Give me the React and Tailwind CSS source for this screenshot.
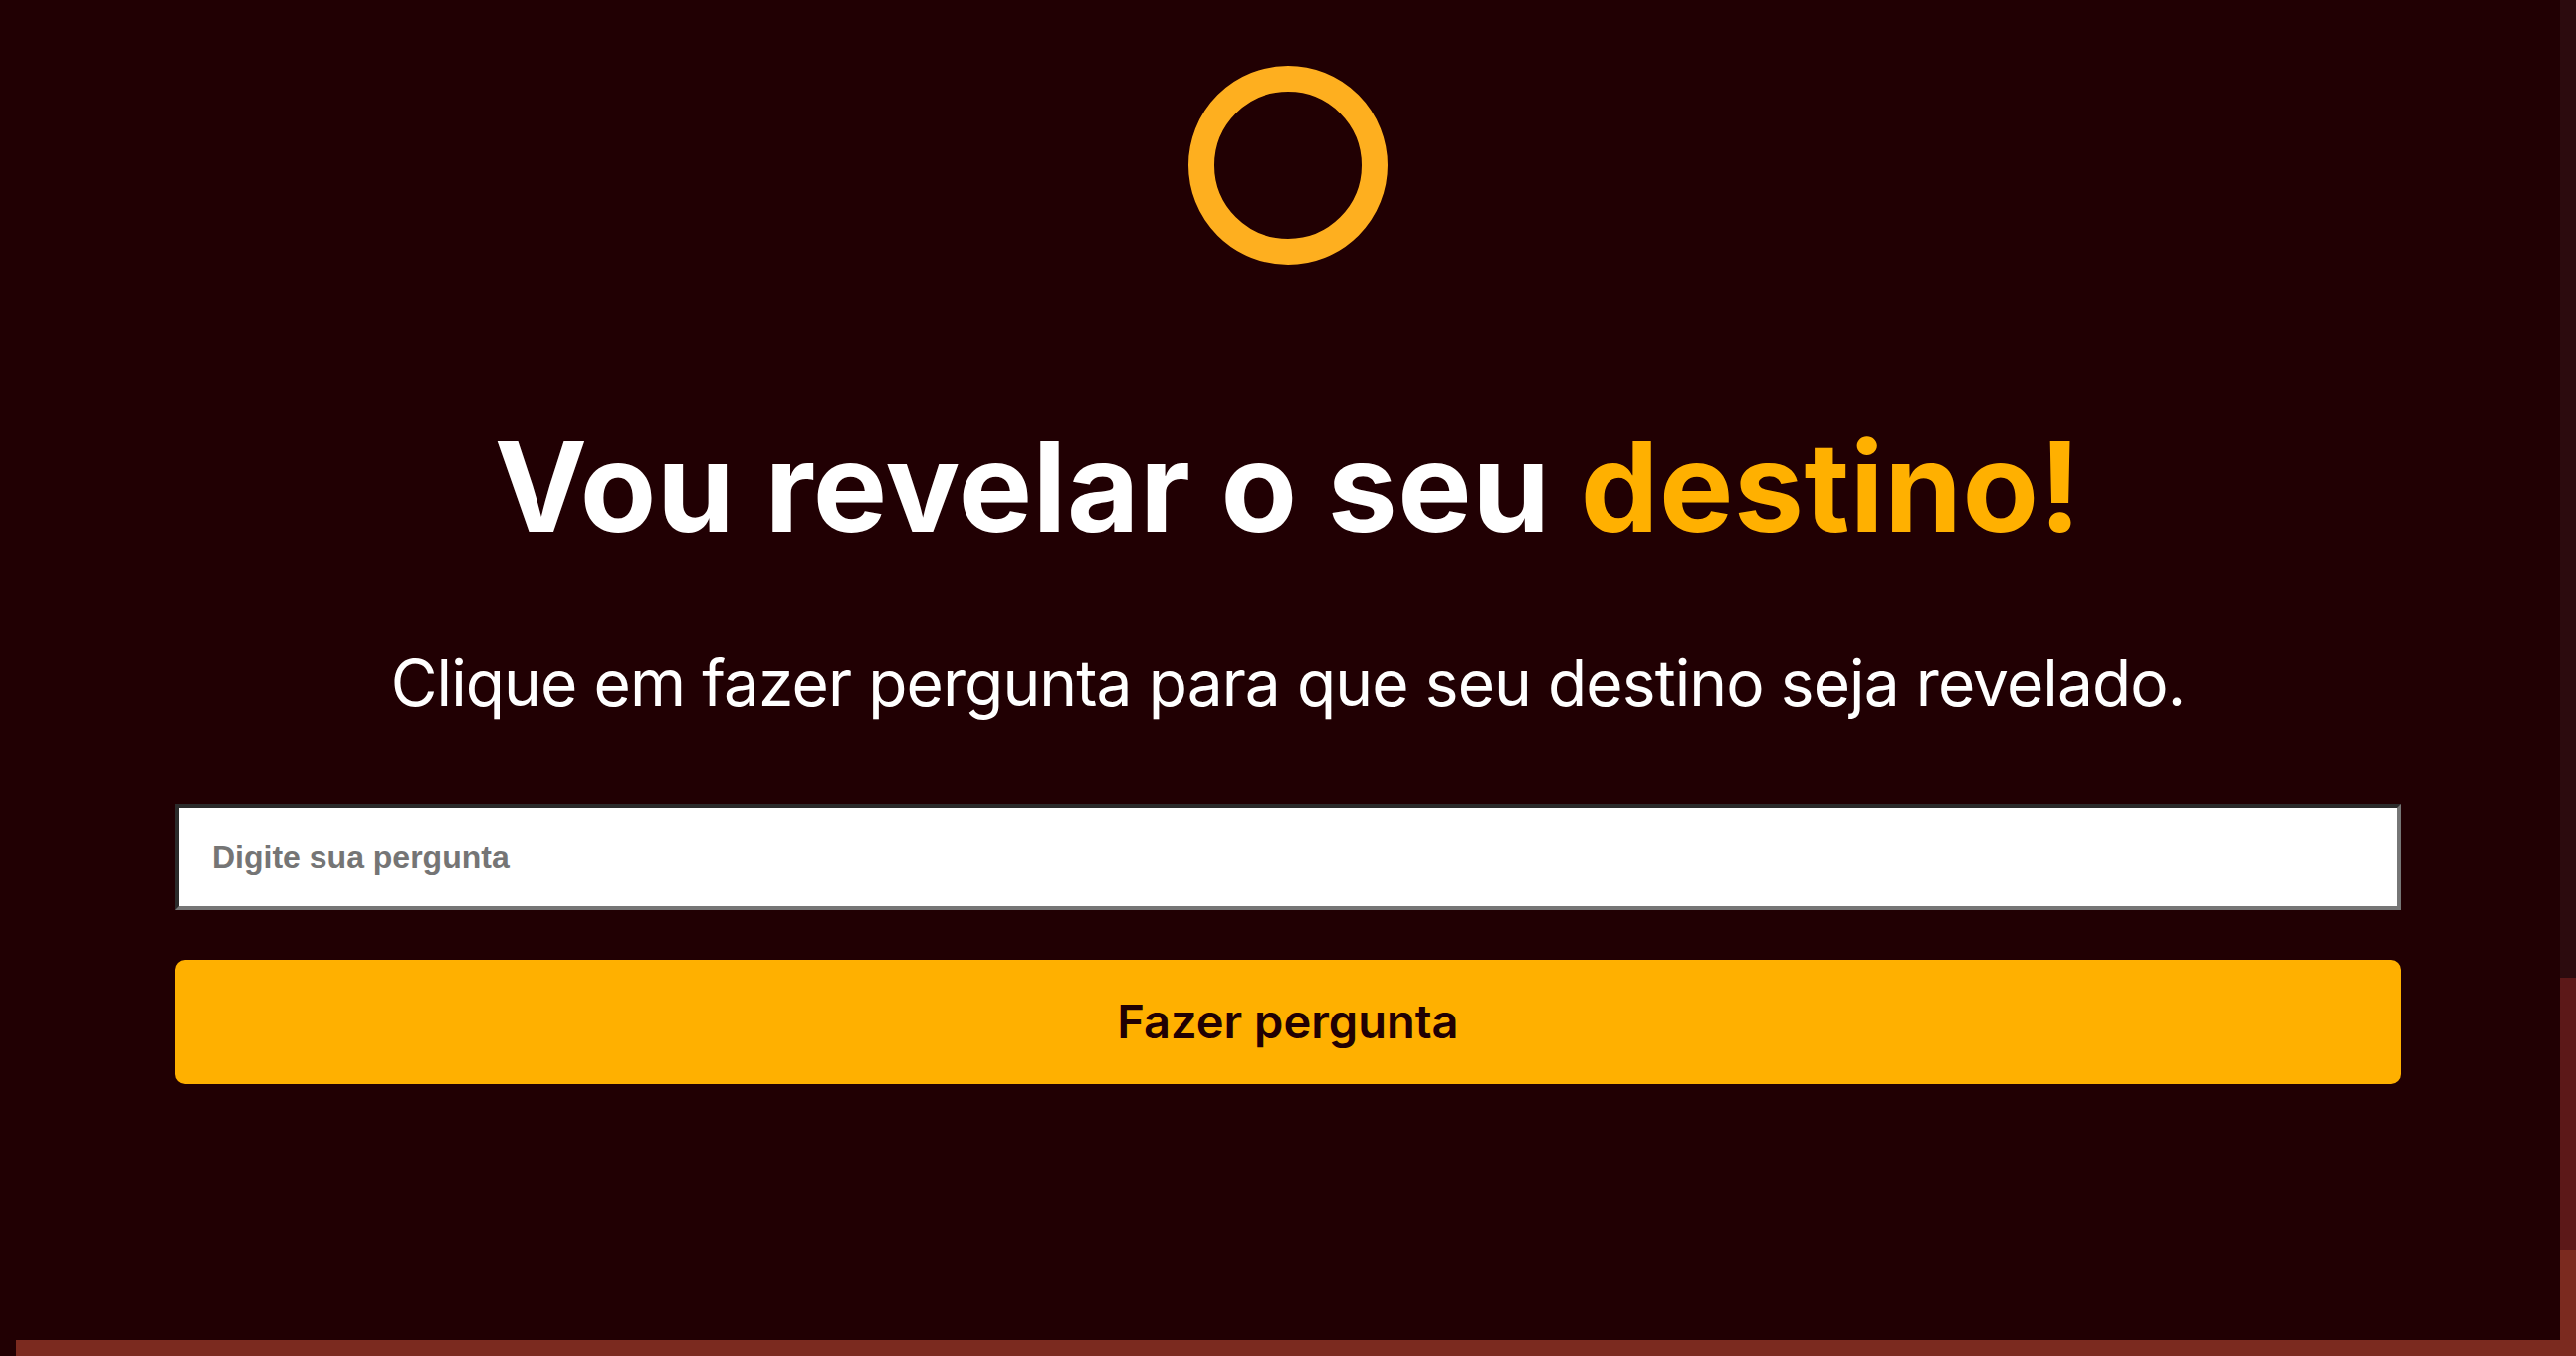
import { useState } from "react";

export default function App() {
  const [pergunta, setPergunta] = useState("");

  return (
    <div className="flex flex-col h-[1362px] w-full bg-[#7b2a1f] overflow-hidden">
      {/* área principal + faixa lateral */}
      <div className="flex h-[1346px]">
        <main className="flex-1 bg-[#210003] pl-4 flex flex-col items-center pt-[66px] font-['Inter',sans-serif]">
          {/* anel */}
          <div className="w-[200px] h-[200px] rounded-full border-[26px] border-[#feaf1f]" />

          <h1 className="mt-[160px] text-[125px] leading-none font-bold text-white tracking-[0.5px]">
            Vou revelar o seu <span className="text-[#ffb000]">destino!</span>
          </h1>

          <p className="mt-[103px] text-[64px] leading-none text-white tracking-[-0.9px]">
            Clique em fazer pergunta para que seu destino seja revelado.
          </p>

          <input
            value={pergunta}
            onChange={(e) => setPergunta(e.target.value)}
            placeholder="Digite sua pergunta"
            className="mt-[90px] w-[2236px] h-[106px] bg-white border-4 border-t-[#2b2b2b] border-l-[#2b2b2b] border-r-[#767676] border-b-[#767676] px-[33px] text-[32px] font-bold font-['Liberation_Sans',Arial,sans-serif] text-black placeholder:text-[#757575] outline-none"
          />

          <button className="mt-[50px] w-[2236px] h-[125px] rounded-[10px] bg-[#ffb000] text-[#210003] text-[47px] font-semibold">
            Fazer pergunta
          </button>
        </main>

        {/* faixa lateral */}
        <div className="w-4 flex flex-col">
          <div className="h-[982px] bg-[#2c0b0e]" />
          <div className="h-[274px] bg-[#5c1818]" />
          <div className="flex-1 bg-[#7b2a1f]" />
        </div>
      </div>

      {/* faixa inferior */}
      <div className="flex h-4">
        <div className="w-4 bg-[#210003]" />
        <div className="flex-1 bg-[#7b2a1f]" />
      </div>
    </div>
  );
}
